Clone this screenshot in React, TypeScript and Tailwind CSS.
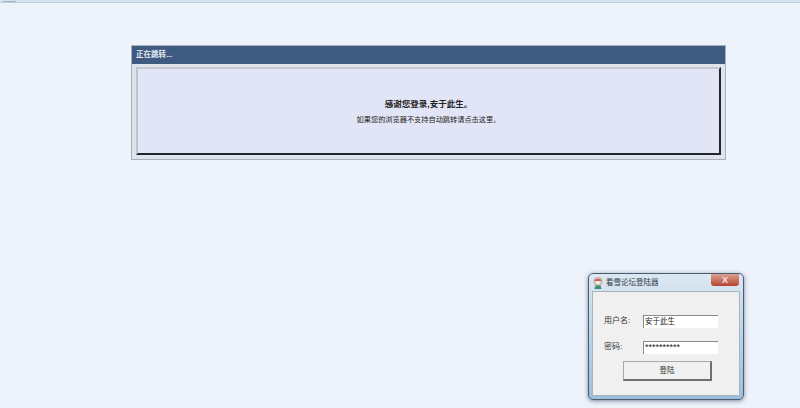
const font = "font-['Liberation_Sans','Noto_Sans_CJK_SC',sans-serif]";

function AppIcon() {
  return (
    <svg width="10" height="12" viewBox="0 0 10 12" className="shrink-0">
      <circle cx="5" cy="4.5" r="4" fill="#e9d8cf" stroke="#c09a90" strokeWidth="1" />
      <path d="M1.5 4 C2.5 1 7.5 1 8.5 4 Z" fill="#c2604f" />
      <circle cx="5" cy="5.5" r="1.8" fill="#f7f0e8" />
      <path d="M2.5 8.5 H7.5 L8.5 12 H1.5 Z" fill="#3f8f78" />
    </svg>
  );
}

function LoginWindow() {
  return (
    <div className="ml-[588px] mt-[113px] h-[127px] w-[156px] rounded-[5px] border border-[#4a5c70] bg-gradient-to-b from-[#dbe8f2] to-[#9dbedb] px-[3px] pb-[3px] shadow-[0_1px_4px_rgba(40,60,90,0.6)]">
      <div className="flex h-[17px] items-start">
        <div className="flex h-full flex-1 items-center gap-[3px] pl-[1px] pt-[1px]">
          <AppIcon />
          <span className="text-[7.5px] leading-none text-[#333a44]">看雪论坛登陆器</span>
        </div>
        <div className="mr-[1px] flex h-[12px] w-[28px] items-center justify-center rounded-b-[3px] bg-gradient-to-b from-[#d8a093] to-[#b5432f] text-[9px] font-bold leading-none text-[#f3e8e4]">
          X
        </div>
      </div>
      <div className="h-[105px] border border-[#a3b6c8] bg-[#f0f0f0] pl-[11px] pt-[22px] text-[8px] text-[#333]">
        <div className="flex h-[14px] items-center">
          <span className="w-[39px] leading-none">用户名:</span>
          <div className="flex h-[13px] w-[75px] items-center border-l border-t border-[#8a8a8a] bg-white pl-[1px] text-[7.5px] leading-none text-[#222]">
            安于此生
          </div>
        </div>
        <div className="mt-[12px] flex h-[14px] items-center">
          <span className="w-[39px] leading-none">密码:</span>
          <div className="flex h-[13px] w-[75px] items-center border-l border-t border-[#8a8a8a] bg-white pl-[1px] text-[9px] leading-none text-[#222]">
            **********
          </div>
        </div>
        <div className="ml-[19px] mt-[7px] flex h-[20px] w-[89px] items-center justify-center border border-b-2 border-r-2 border-[#a8a8a8] border-b-[#707070] border-r-[#707070] bg-[#f0f0f0] text-[7.5px] leading-none text-[#333]">
          登陆
        </div>
      </div>
    </div>
  );
}

export default function App() {
  return (
    <div className={`${font} h-[408px] w-[800px] overflow-hidden bg-[#eef2fb]`}>
      <div className="h-[3px] border-b border-[#b9d0e0] bg-[#d3e4ee] pl-[3px]">
        <div className="h-[2px] w-[13px] rounded-b-full border-b border-[#9fb0ba]" />
      </div>
      <div className="ml-[131px] mt-[42px] h-[115px] w-[595px] border border-[#a9b1be] bg-[#dfe3ec]">
        <div className="flex h-[18px] items-center bg-[#3f5a80] pl-1 text-[7.5px] font-bold leading-none text-[#e8edf5]">
          正在跳转...
        </div>
        <div className="mx-[4px] mt-[3px] flex h-[88px] flex-col items-center justify-center gap-[4px] border-2 border-b-[#22252c] border-l-[#bfc3cc] border-r-[#22252c] border-t-[#c5c8d2] bg-[#e2e5f5] pt-[1px] text-[7.2px] leading-[12px] text-[#222]">
          <p className="text-[8.5px] font-bold">感谢您登录,安于此生。</p>
          <p>如果您的浏览器不支持自动跳转请点击这里。</p>
        </div>
      </div>
      <LoginWindow />
    </div>
  );
}
